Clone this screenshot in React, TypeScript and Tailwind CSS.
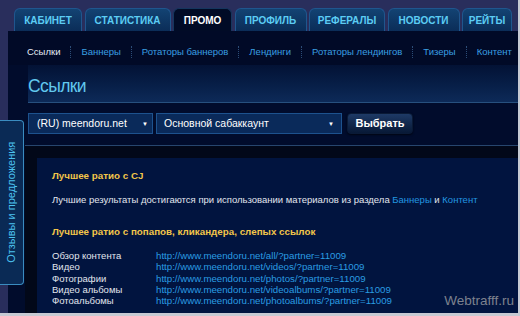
import React from 'react';

const tabs = [
  { label: 'КАБИНЕТ', w: 'w-[68px]' },
  { label: 'СТАТИСТИКА', w: 'w-[86px]' },
  { label: 'ПРОМО', w: 'w-[59px]', active: true },
  { label: 'ПРОФИЛЬ', w: 'w-[72px]' },
  { label: 'РЕФЕРАЛЫ', w: 'w-[76px]' },
  { label: 'НОВОСТИ', w: 'w-[72px]' },
  { label: 'РЕЙТЫ', w: 'w-[50px]' },
];

const subnav = ['Ссылки', 'Баннеры', 'Ротаторы баннеров', 'Лендинги', 'Ротаторы лендингов', 'Тизеры', 'Контент'];

const links = [
  ['Обзор контента', 'http://www.meendoru.net/all/?partner=11009'],
  ['Видео', 'http://www.meendoru.net/videos/?partner=11009'],
  ['Фотографии', 'http://www.meendoru.net/photos/?partner=11009'],
  ['Видео альбомы', 'http://www.meendoru.net/videoalbums/?partner=11009'],
  ['Фотоальбомы', 'http://www.meendoru.net/photoalbums/?partner=11009'],
];

function Select({ value, className }: { value: string; className: string }) {
  return (
    <div
      className={`h-[21px] flex items-center justify-between border border-[#1d528e] bg-[#0a2a5a] text-[10.5px] text-white ${className}`}
    >
      <span>{value}</span>
      <span className="text-[6px] leading-none">▼</span>
    </div>
  );
}

export default function App() {
  return (
    <div
      className="w-[520px] h-[316px] overflow-hidden border-r-2 border-b-[3px] border-[#c6cad3] bg-[#292e5c] relative"
      style={{ fontFamily: '"Liberation Sans", Arial, sans-serif' }}
    >
      {/* top tabs */}
      <div className="flex gap-[2.5px] pl-[14px] pt-[8px] h-[31px]">
        {tabs.map((t) => (
          <div
            key={t.label}
            className={`${t.w} h-[23px] shrink-0 rounded-t-[6px] border border-b-0 flex items-center justify-center text-[10px] font-bold ${
              t.active
                ? 'bg-[#010b26] border-[#15365e] text-white'
                : 'bg-gradient-to-b from-[#134373] to-[#0b2d58] border-[#1f568e] text-[#5ccdf4]'
            }`}
          >
            {t.label}
          </div>
        ))}
      </div>

      {/* main block */}
      <div className="ml-[8px] h-[282px] bg-[#010c2c] flex flex-col">
        {/* sub navigation */}
        <div className="h-[34px] shrink-0 flex items-center whitespace-nowrap pt-[8px] pl-[19px] text-[9.5px] bg-[#010a27]">
          {subnav.map((s, i) => (
            <React.Fragment key={s}>
              {i > 0 && <span className="mx-[10px] h-[12px] border-l border-dotted border-[#2c4d78]" />}
              <span className={i === 0 ? 'text-[#e6ecf6]' : 'text-[#3a9fe2]'}>{s}</span>
            </React.Fragment>
          ))}
        </div>

        {/* title */}
        <div className="ml-[20px] h-[38px] shrink-0 bg-gradient-to-b from-[#031235] to-[#0d2a58] border-b border-[#27507e] pt-[10px]">
          <h1 className="text-[17.5px] leading-[22px] tracking-[-0.6px] text-[#62c8ee]">Ссылки</h1>
        </div>

        {/* selects */}
        <div className="ml-[20px] mt-[10px] h-[21px] flex items-center gap-[3px] shrink-0">
          <Select value="(RU) meendoru.net" className="w-[125px] pl-[8px] pr-[4px]" />
          <Select value="Основной сабаккаунт" className="w-[186px] pl-[7px] pr-[7px]" />
          <button className="ml-[2px] w-[66px] h-[21px] rounded-[4px] bg-gradient-to-b from-[#1e3a66] to-[#081936] border border-[#0a1a36] shadow-[0_1px_2px_rgba(0,0,0,0.6)] text-[11px] font-bold text-white">
            Выбрать
          </button>
        </div>

        {/* content box */}
        <div className="ml-[17px] mt-[11px] flex-1 border-t border-[#27466e] bg-[#020819] pt-[12px] pl-[12px] flex">
          <div className="flex-1 bg-[#01143f] pl-[15px] text-[9.5px] text-[#e2e6ee]">
            <div className="mt-[12px] leading-[12px] text-[9.8px] font-bold text-[#f2c64a]">Лучшее ратио с CJ</div>
            <div className="mt-[12px] leading-[12px]">
              Лучшие результаты достигаются при использовании материалов из раздела{' '}
              <span className="text-[#2196e0]">Баннеры</span> и <span className="text-[#2196e0]">Контент</span>
            </div>
            <div className="mt-[20px] leading-[12px] text-[9.8px] font-bold text-[#f2c64a]">
              Лучшее ратио с попапов, кликандера, слепых ссылок
            </div>
            <div className="mt-[12px] flex flex-col">
              {links.map(([label, url]) => (
                <div key={label} className="flex leading-[11.25px]">
                  <span className="w-[104px] shrink-0">{label}</span>
                  <span className="text-[9.7px] text-[#2a9ce2]">{url}</span>
                </div>
              ))}
            </div>
          </div>
        </div>
      </div>

      {/* side feedback tab */}
      <div className="absolute left-0 top-[120px] w-[24px] h-[165px] rounded-r-[4px] border border-l-0 border-[#3a8cc0] bg-[#0a2a55] flex items-center justify-center">
        <span className="-rotate-90 whitespace-nowrap text-[11px] text-[#4cc2f0]">Отзывы и предложения</span>
      </div>

      {/* watermark */}
      <div className="absolute right-[4px] bottom-[2px] text-[13.5px] text-[#7d828e]">Webtrafff.ru</div>
    </div>
  );
}
